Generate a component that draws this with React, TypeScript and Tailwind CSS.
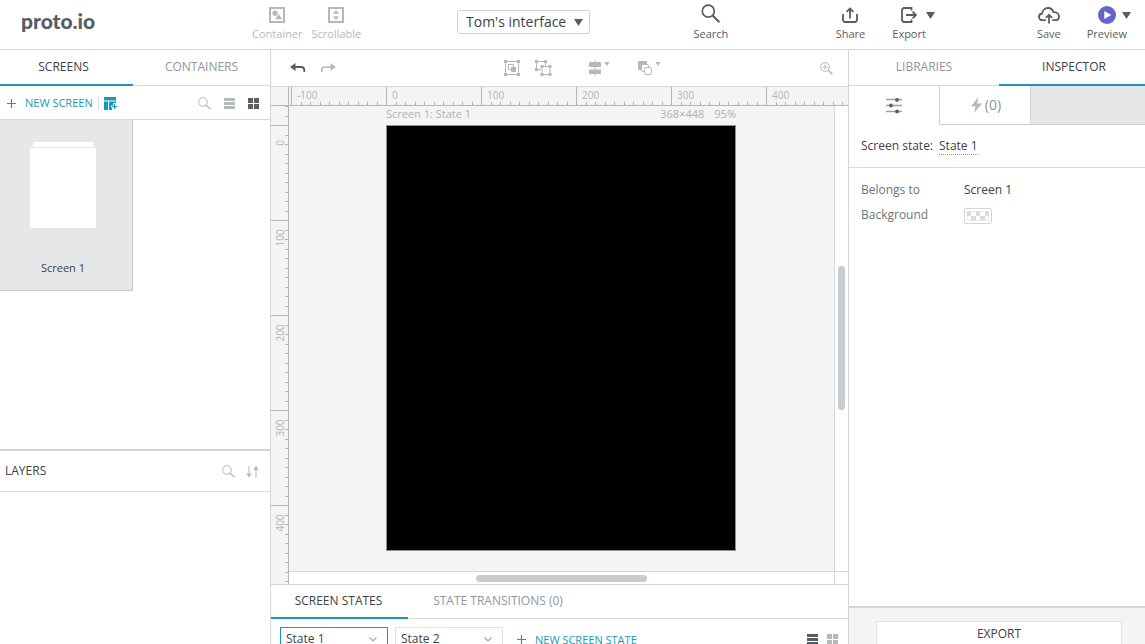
import { ReactNode, RefObject, useLayoutEffect, useRef, useState } from 'react';

const RULER_STEP = 95; // 100 units at 95% zoom
const MINORS = [1, 2, 3, 4, 5, 6, 7, 8, 9];

// Majors from -100 up to the last one whose label fits in the given length
function getMajors(length: number, origin: number): number[] {
  const last = Math.floor((length - origin - 26) / RULER_STEP);
  return Array.from({ length: Math.max(0, last + 2) }, (_, i) => i - 1);
}

function useSize(ref: RefObject<HTMLDivElement | null>) {
  const [size, setSize] = useState({ width: 0, height: 0 });

  useLayoutEffect(() => {
    const el = ref.current;
    if (!el) return;
    const measure = () => setSize({ width: el.clientWidth, height: el.clientHeight });
    measure();
    const observer = new ResizeObserver(measure);
    observer.observe(el);
    return () => observer.disconnect();
  }, [ref]);

  return size;
}

function Caret({ className }: { className: string }) {
  return (
    <svg viewBox="0 0 9 7" className={className} fill="currentColor" aria-hidden="true">
      <path d="M0 0h9L4.5 7z" />
    </svg>
  );
}

function SearchIcon({ className }: { className: string }) {
  return (
    <svg viewBox="0 0 13 13" className={className} fill="none" stroke="currentColor" aria-hidden="true">
      <circle cx="5" cy="5" r="4.3" />
      <path d="M8 8l4.5 4.5" strokeWidth="1.3" />
    </svg>
  );
}

function PlusIcon() {
  return (
    <svg viewBox="0 0 9 9" className="size-[9px]" stroke="currentColor" strokeWidth="1.2" aria-hidden="true">
      <path d="M4.5 0v9M0 4.5h9" />
    </svg>
  );
}

function ListIcon() {
  return (
    <svg viewBox="0 0 11 11" className="size-[11px]" fill="currentColor" aria-hidden="true">
      <path d="M0 0h11v3H0zM0 4h11v3H0zM0 8h11v3H0z" />
    </svg>
  );
}

function GridIcon() {
  return (
    <svg viewBox="0 0 11 11" className="size-[11px]" fill="currentColor" aria-hidden="true">
      <path d="M0 0h5v5H0zM6 0h5v5H6zM0 6h5v5H0zM6 6h5v5H6z" />
    </svg>
  );
}

function HeaderButton({ label, disabled, children }: { label: string; disabled?: boolean; children: ReactNode }) {
  return (
    <button
      type="button"
      disabled={disabled}
      className={`flex flex-col items-center pt-1 text-[11px] leading-4 ${disabled ? 'text-[#b4b9bc]' : 'text-[#565e63]'}`}
    >
      <span className="flex h-[22px] items-center">{children}</span>
      {label}
    </button>
  );
}

function Tab({ label, active, className }: { label: string; active?: boolean; className: string }) {
  return (
    <button
      type="button"
      className={`border-b-2 text-center text-xs ${active ? 'border-[#169bb4] text-[#3c4246]' : 'border-transparent text-[#8e979c]'} ${className}`}
    >
      {label}
    </button>
  );
}

function Header() {
  return (
    <header className="flex h-[50px] shrink-0 border-b border-[#d8dadb] bg-white">
      <a href="#" className="w-[231px] shrink-0 pt-[5px] pl-[21px] font-['Lato',sans-serif] text-[21px] leading-8 font-black text-[#565e63]">
        proto.io
      </a>
      <div className="flex w-[226px] shrink-0 gap-[9px] pl-[21px]">
        <HeaderButton label="Container" disabled>
          <svg viewBox="0 0 16 16" className="size-4" fill="none">
            <path d="M1 1h14v14H1z" stroke="currentColor" strokeWidth="2" />
            <circle cx="6" cy="6.2" r="2.6" fill="currentColor" />
            <path d="M9.500 7l3.700 5.200H6.300z" fill="currentColor" />
          </svg>
        </HeaderButton>
        <HeaderButton label="Scrollable" disabled>
          <svg viewBox="0 0 16 16" className="size-4" fill="none">
            <path d="M1 1h14v14H1z" stroke="currentColor" strokeWidth="2" />
            <path d="M8 3l3 3.800H5zM8 13l3-3.800H5z" fill="currentColor" />
          </svg>
        </HeaderButton>
      </div>
      <label className="relative mt-2.5 h-6 w-[133px] shrink-0 text-[#3c4246]">
        <select aria-label="Project" className="block h-6 w-full appearance-none rounded-[3px] border border-[#d0d3d5] bg-white pl-2 text-sm leading-5">
          <option>Tom's interface</option>
        </select>
        <Caret className="pointer-events-none absolute top-[9px] right-[7px] h-[7px] w-[9px] text-[#565e63]" />
      </label>
      <div className="flex flex-1 justify-center pr-1">
        <HeaderButton label="Search">
          <svg viewBox="0 0 20 20" className="mb-0.5 size-5" fill="none" stroke="currentColor">
            <circle cx="7.300" cy="7.200" r="6" strokeWidth="1.700" />
            <path d="M11.700 11.600l6.600 6.600" strokeWidth="2.100" />
          </svg>
        </HeaderButton>
      </div>
      <div className="flex gap-[27px] pr-[102px]">
        <HeaderButton label="Share">
          <svg viewBox="0 0 16 16" className="size-4" fill="none" stroke="currentColor" strokeWidth="1.800">
            <path d="M1 7v6.500L2.500 15h11l1.500-1.500V7M8 11.500V2M4.600 4.900L8 1.500l3.400 3.400" />
          </svg>
        </HeaderButton>
        <div className="flex">
          <HeaderButton label="Export">
            <svg viewBox="0 0 16 16" className="size-4" fill="none" stroke="currentColor" strokeWidth="1.800">
              <path d="M10.500 3.500V1H2.500L1 2.500v11L2.500 15h8v-2.500M5 8h10M11.600 4.600L15 8l-3.400 3.400" />
            </svg>
          </HeaderButton>
          <Caret className="mt-3 h-[7px] w-[9px] text-[#565e63]" />
        </div>
      </div>
      <div className="flex gap-[26px] pr-[19px]">
        <HeaderButton label="Save">
          <svg viewBox="0 0 22 17" className="h-[17px] w-[22px]" fill="none" stroke="currentColor" strokeWidth="1.800">
            <path d="M7.8 13.2H4.6C2.5 13.2 1 11.8 1 9.8c0-1.800 1.300-3.100 3.100-3.300C4.300 3.300 6.800 1 10 1c2.700 0 4.900 1.700 5.600 4.200 3 0 5.400 1.600 5.400 4.200 0 2.200-1.600 3.800-3.800 3.800h-3" />
            <path d="M11 16.500V8M7.900 10.900L11 7.800l3.100 3.100" />
          </svg>
        </HeaderButton>
        <div className="flex">
          <HeaderButton label="Preview">
            <svg viewBox="0 0 18 18" className="size-[18px]">
              <circle cx="9" cy="9" r="9" fill="#6564c8" />
              <path d="M6.300 5l7 4-7 4z" fill="#fff" />
            </svg>
          </HeaderButton>
          <Caret className="mt-3 -mr-[5px] -ml-[5px] h-[7px] w-[9px] text-[#565e63]" />
        </div>
      </div>
    </header>
  );
}

function LeftPanel() {
  return (
    <aside className="flex w-[271px] shrink-0 flex-col border-r border-[#d3d5d6] bg-white">
      <nav className="flex h-9 shrink-0 shadow-[inset_0_-1px_0_#d8dadb]">
        <Tab label="SCREENS" active className="w-[133px] pr-1.5" />
        <Tab label="CONTAINERS" className="flex-1" />
      </nav>
      <div className="flex h-[34px] shrink-0 items-center border-b border-[#d8dadb] pt-0.5 pr-[11px] pl-[7px] text-[#169bb4]">
        <button type="button" className="flex items-center gap-[9px] text-[11px]">
          <PlusIcon />
          NEW SCREEN
        </button>
        <button type="button" aria-label="Templates" className="ml-[5px] border-l border-[#d8dadb] pl-[5px]">
          <svg viewBox="0 0 13 13" className="size-[13px]" fill="currentColor">
            <path d="M0 0h12v3.500H0zM0 4.500h4V13H0zM5 4.500h7V6H9v2.500H7v2h1V13H5z" />
            <path d="M10.500 7v5M8 9.500h5" stroke="currentColor" strokeWidth="1.200" />
          </svg>
        </button>
        <div className="ml-auto flex items-center gap-[13px] text-[#b4b9bc]">
          <button type="button" aria-label="Search screens">
            <SearchIcon className="size-[13px]" />
          </button>
          <button type="button" aria-label="List view">
            <ListIcon />
          </button>
          <button type="button" aria-label="Grid view" className="text-[#565e63]">
            <GridIcon />
          </button>
        </div>
      </div>
      <div className="min-h-0 flex-1 overflow-hidden">
        <button type="button" className="flex h-[171px] w-[133px] flex-col items-center border-r border-b border-[#c9cccd] bg-[#e6e7e8] pt-[22px] pr-1.5 text-[11px] text-[#3c4246]">
          <span className="h-[5px] w-[60px] bg-white" />
          <span className="mt-px h-20 w-[66px] bg-white" />
          <span className="mt-8 leading-4">Screen 1</span>
        </button>
      </div>
      <section className="h-[195px] shrink-0 border-t-2 border-[#cfd1d2]">
        <div className="flex h-[41px] items-center border-b border-[#d8dadb] pr-[11px] pl-[5px] text-xs text-[#3c4246]">
          <h2>LAYERS</h2>
          <div className="ml-auto flex items-center gap-[11px] text-[#b4b9bc]">
            <button type="button" aria-label="Search layers">
              <SearchIcon className="size-[13px]" />
            </button>
            <button type="button" aria-label="Sort layers">
              <svg viewBox="0 0 13 13" className="size-[13px]" fill="currentColor">
                <path d="M2.500 1h1v7.500h2.300L3 12.500.200 8.500h2.300zM9.500 12.500V5H7.200L10 1l2.800 4h-2.300v7.500z" />
              </svg>
            </button>
          </div>
        </div>
      </section>
    </aside>
  );
}

function Toolbar() {
  return (
    <div className="flex h-[37px] shrink-0 items-center border-b border-[#d3d5d6] bg-white pr-[15px] pl-[19px] text-[#b4b9bc]">
      <button type="button" aria-label="Undo" className="text-[#565e63]">
        <svg viewBox="0 0 16 10" className="h-2.5 w-4" fill="none">
          <path d="M0 4l5.500-4v8z" fill="currentColor" />
          <path d="M4 4h7c2.300 0 3.300 1.200 3.300 3.200V9" stroke="currentColor" strokeWidth="1.800" />
        </svg>
      </button>
      <button type="button" aria-label="Redo" className="ml-3.5">
        <svg viewBox="0 0 16 10" className="h-2.5 w-4" fill="none">
          <path d="M16 4l-5.500-4v8z" fill="currentColor" />
          <path d="M12 4H5C2.700 4 1.700 5.200 1.700 7.200V9" stroke="currentColor" strokeWidth="1.600" />
        </svg>
      </button>
      <button type="button" aria-label="Group" className="ml-[168px]">
        <svg viewBox="0 0 16 16" className="size-4" fill="none">
          <path d="M1.500 1.500h13v13h-13z" stroke="currentColor" />
          <path d="M0 0h3v3H0zM13 0h3v3h-3zM0 13h3v3H0zM13 13h3v3h-3zM7 7h5v5H7z" fill="currentColor" />
          <path d="M7 9.500H4.500v-5h5V7" stroke="currentColor" />
        </svg>
      </button>
      <button type="button" aria-label="Ungroup" className="ml-[15px]">
        <svg viewBox="0 0 17 16" className="h-4 w-[17px]" fill="none">
          <path d="M6 9.500H1.500v-8h9V6" stroke="currentColor" />
          <path d="M7 6.500h8v8H7z" stroke="currentColor" />
          <path d="M0 0h3v3H0zM9 0h3v3H9zM0 8h3v3H0zM5.500 5h3v3h-3zM13.500 5h3v3h-3zM5.500 13h3v3h-3zM13.500 13h3v3h-3z" fill="currentColor" />
        </svg>
      </button>
      <button type="button" aria-label="Align" className="ml-[37px] flex gap-[3px]">
        <svg viewBox="0 0 12 16" className="h-4 w-3" fill="currentColor">
          <path d="M5.500 0h1v16h-1z" />
          <rect y="2" width="12" height="5" rx="0.700" />
          <rect y="9.500" width="12" height="4.500" rx="0.700" />
        </svg>
        <Caret className="mt-0.5 h-1 w-1.5" />
      </button>
      <button type="button" aria-label="Arrange" className="ml-7 flex gap-[3px]">
        <svg viewBox="0 0 14 16" className="h-4 w-3.5" fill="none">
          <rect y="1" width="9" height="9" rx="1" fill="currentColor" />
          <rect x="3.500" y="4.500" width="7" height="7" rx="1.500" fill="#fff" stroke="currentColor" />
          <rect x="6.500" y="7.500" width="7" height="7" rx="1.500" fill="#fff" stroke="currentColor" />
        </svg>
        <Caret className="mt-0.5 h-1 w-1.5" />
      </button>
      <button type="button" aria-label="Zoom in" className="ml-auto">
        <svg viewBox="0 0 13 13" className="size-[13px]" fill="none" stroke="currentColor">
          <circle cx="5" cy="5" r="4.400" />
          <path d="M8.200 8.200l4.300 4.300" strokeWidth="1.500" />
          <path d="M5 2.500v5M2.500 5h5" />
        </svg>
      </button>
    </div>
  );
}

function HorizontalRuler({ length }: { length: number }) {
  return (
    <svg width="100%" height="18" className="block" shapeRendering="crispEdges">
      {getMajors(length, 115).map((n) => {
        const x = 115 + n * RULER_STEP;
        return (
          <g key={n} fill="#b3b5b6">
            <rect x={x} y="0" width="1" height="18" />
            {MINORS.map((m) => (
              <rect key={m} x={Math.round(x + m * 9.5)} y="15" width="1" height="3" />
            ))}
            <text x={x + 6} y="12" fontSize="10">
              {n * 100}
            </text>
          </g>
        );
      })}
      <rect x="17" y="0" width="1" height="18" fill="#b3b5b6" />
    </svg>
  );
}

function VerticalRuler({ length }: { length: number }) {
  return (
    <svg width="17" height="100%" className="block" shapeRendering="crispEdges">
      {getMajors(length, 19).map((n) => {
        const y = 19 + n * RULER_STEP;
        return (
          <g key={n} fill="#b3b5b6">
            <rect x="0" y={y} width="17" height="1" />
            {MINORS.map((m) => (
              <rect key={m} x="14" y={Math.round(y + m * 9.5)} width="3" height="1" />
            ))}
            {n >= 0 && (
              <text transform={`translate(13 ${y + 18}) rotate(-90)`} textAnchor="middle" fontSize="10">
                {n * 100}
              </text>
            )}
          </g>
        );
      })}
    </svg>
  );
}

function Canvas() {
  const ref = useRef<HTMLDivElement>(null);
  const { width, height } = useSize(ref);

  return (
    <div ref={ref} className="flex min-h-0 flex-1 flex-col bg-[#f4f4f4]">
      <div className="h-[19px] shrink-0 border-b border-[#b3b5b6]">
        <HorizontalRuler length={width} />
      </div>
      <div className="flex min-h-0 flex-1">
        <div className="w-[18px] shrink-0 overflow-hidden border-r border-[#b3b5b6]">
          <VerticalRuler length={height - 19} />
        </div>
        <div className="flex min-w-0 flex-1 flex-col">
          <div className="flex min-h-0 flex-1">
            <div className="min-w-0 flex-1 overflow-hidden pl-[97px]">
              <div className="w-[350px]">
                <div className="flex h-[19px] gap-2.5 text-[11px] leading-4 text-[#b0b3b5]">
                  <span className="mr-auto">Screen 1: State 1</span>
                  <span>368×448</span>
                  <span>95%</span>
                </div>
                <div className="h-[426px] border border-[#8f8f8f] bg-black" />
              </div>
            </div>
            <div className="flex w-3.5 shrink-0 items-start border-l border-[#d3d5d6] bg-white">
              <div className="mt-40 ml-[3px] h-36 w-[7px] rounded-full bg-[#c8cbcf]" />
            </div>
          </div>
          <div className="flex h-[13px] shrink-0 border-t border-[#d3d5d6] bg-white">
            <div className="flex-1 pt-[3px] pl-[187px]">
              <div className="h-[7px] w-[171px] rounded-full bg-[#c8cbcf]" />
            </div>
            <div className="w-3.5 border-l border-[#d3d5d6]" />
          </div>
        </div>
      </div>
    </div>
  );
}

function StateSelect({ name, active }: { name: string; active?: boolean }) {
  return (
    <label className="relative block w-[108px] shrink-0">
      <select
        aria-label={name}
        className={`block h-6 w-full appearance-none border bg-white pl-[5px] text-xs text-[#3c4246] ${active ? 'border-[#169bb4]' : 'border-[#e0e2e3]'}`}
      >
        <option>{name}</option>
      </select>
      <svg viewBox="0 0 8 5" className="pointer-events-none absolute top-2.5 right-[11px] h-[5px] w-2" fill="none" stroke="#a4aaad" strokeWidth="1.200">
        <path d="M0.500 0.500L4 4 7.500 0.500" />
      </svg>
    </label>
  );
}

function StatesPanel() {
  return (
    <section className="h-[60px] shrink-0 overflow-hidden border-t border-[#d3d5d6] bg-white">
      <nav className="flex h-[34px] shadow-[inset_0_-1px_0_#d8dadb]">
        <Tab label="SCREEN STATES" active className="w-[137px] pr-0.5" />
        <Tab label="STATE TRANSITIONS (0)" className="w-[180px]" />
      </nav>
      <div className="flex items-center gap-[7px] pt-2 pr-2.5 pl-[9px]">
        <StateSelect name="State 1" active />
        <StateSelect name="State 2" />
        <button type="button" className="ml-[7px] flex items-center gap-[9px] text-[11px] leading-none text-[#169bb4]">
          <PlusIcon />
          NEW SCREEN STATE
        </button>
        <div className="ml-auto flex items-center gap-[9px] text-[#b4b9bc]">
          <button type="button" aria-label="List view" className="text-[#565e63]">
            <ListIcon />
          </button>
          <button type="button" aria-label="Grid view">
            <GridIcon />
          </button>
        </div>
      </div>
    </section>
  );
}

function Inspector() {
  return (
    <aside className="flex w-[297px] shrink-0 flex-col border-l border-[#d3d5d6] bg-white text-xs text-[#3c4246]">
      <nav className="flex h-9 shrink-0 shadow-[inset_0_-1px_0_#d8dadb]">
        <Tab label="LIBRARIES" className="w-[150px]" />
        <Tab label="INSPECTOR" active className="flex-1 pl-1" />
      </nav>
      <div className="flex h-[39px] shrink-0">
        <button type="button" aria-label="Properties" className="flex w-[90px] items-center justify-center">
          <svg viewBox="0 0 16 16" className="size-4">
            <path d="M0 1.500h16M0 7.500h16M0 13.500h16" stroke="#9aa1a5" strokeWidth="1.500" />
            <g fill="#565e63">
              <circle cx="11" cy="1.900" r="1.900" />
              <circle cx="5" cy="7.500" r="1.900" />
              <circle cx="11" cy="13.500" r="1.900" />
            </g>
          </svg>
        </button>
        <button type="button" className="flex w-[91px] items-center justify-center gap-[3px] border-b border-l border-[#cfd1d2] pl-0.5 text-sm text-[#8e979c]">
          <svg viewBox="0 0 11 16" className="h-4 w-[11px]" fill="#b4b9bc" aria-hidden="true">
            <path d="M7.500 0L0 9.200h4.500L3 16l8-9.500H6.200z" />
          </svg>
          (0)
        </button>
        <div className="flex-1 border-b border-l border-[#cfd1d2] bg-[#e6e7e8]" />
      </div>
      <div className="flex h-[43px] shrink-0 items-center gap-1.5 border-b border-[#d8dadb] px-3">
        <span>Screen state:</span>
        <button type="button" className="border-b border-dotted border-[#8e979c] leading-4">
          State 1
        </button>
      </div>
      <dl className="grid flex-1 auto-rows-[25px] grid-cols-[103px_1fr] items-center px-3 pt-[9px]">
        <dt className="text-[#6d7579]">Belongs to</dt>
        <dd>Screen 1</dd>
        <dt className="text-[#6d7579]">Background</dt>
        <dd>
          <button type="button" aria-label="Background" className="mt-0.5 block rounded-[2px] border border-[#d3d5d6] p-0.5">
            <svg viewBox="0 0 22 10" className="h-2.5 w-[22px]">
              <rect x="0.500" y="0.500" width="21" height="9" fill="#fff" stroke="#ececec" />
              <path d="M0 0h4v5H0zM9 0h4v5H9zM18 0h4v5h-4zM4 5h5v4.500H4zM13 5h5v4.500h-5z" fill="#dcdcdc" />
            </svg>
          </button>
        </dd>
      </dl>
      <div className="h-[38px] shrink-0 overflow-hidden border-t-2 border-[#d3d7da] bg-[#f4f4f4] pt-[13px] pr-[23px] pl-[27px]">
        <button type="button" className="h-[26px] w-full border border-[#e0e2e3] bg-white">
          EXPORT
        </button>
      </div>
    </aside>
  );
}

export default function App() {
  return (
    <div className="flex h-screen flex-col overflow-hidden bg-white font-['Open_Sans',sans-serif]">
      <Header />
      <div className="flex min-h-0 flex-1">
        <LeftPanel />
        <main className="flex min-w-0 flex-1 flex-col">
          <Toolbar />
          <Canvas />
          <StatesPanel />
        </main>
        <Inspector />
      </div>
    </div>
  );
}
